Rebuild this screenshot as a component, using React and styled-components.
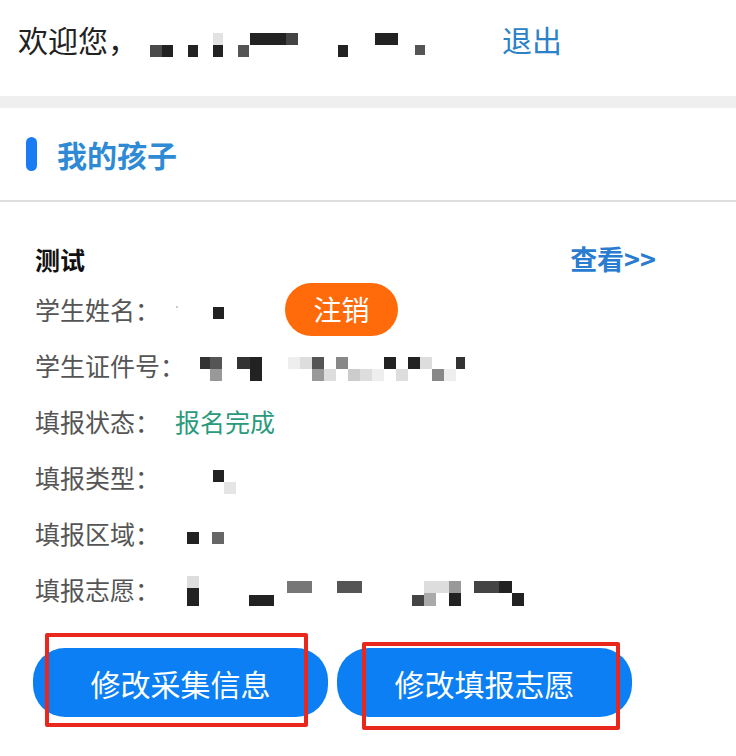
import React from "react";
import styled, { createGlobalStyle } from "styled-components";

const Global = createGlobalStyle`
  html, body { margin: 0; padding: 0; background: #fff; }
  body { font-family: "Noto Sans CJK SC", "Noto Sans", sans-serif; }
`;

const Page = styled.div`
  width: 736px;
  min-height: 756px;
  background: #fff;
  overflow: hidden;
`;

const Header = styled.header`
  height: 96px;
  box-sizing: border-box;
  padding: 0 0 18px 18px;
  display: flex;
  align-items: center;
  font-size: 30px;
  color: #222;
`;

const Greeting = styled.span`
  width: 120px;
  white-space: nowrap;
  line-height: 1;
`;

const Logout = styled.a`
  color: #2b82c8;
  font-size: 30px;
  line-height: 1;
  text-decoration: none;
`;

const Band = styled.div`
  height: 12px;
  background: #efefef;
`;

const SectionTitle = styled.div`
  height: 92px;
  display: flex;
  align-items: center;
  gap: 20px;
  padding-left: 26px;
  border-bottom: 2px solid #dedede;
`;

const TitleBar = styled.span`
  width: 11px;
  height: 34px;
  border-radius: 6px;
  background: #1a7cf5;
`;

const TitleText = styled.h2`
  margin: 0;
  font-size: 30px;
  font-weight: 600;
  color: #2e8ad4;
  line-height: 1;
`;

const Card = styled.section`
  padding: 34px 0 0 35px;
`;

const CardHead = styled.div`
  height: 45px;
  display: flex;
  align-items: center;
  justify-content: space-between;
  padding-right: 80px;
`;

const ChildName = styled.span`
  font-size: 25px;
  font-weight: 700;
  color: #111;
`;

const ViewLink = styled.a`
  font-size: 27px;
  font-weight: 700;
  color: #2a7cd0;
  text-decoration: none;
`;

const InfoRow = styled.div`
  height: 56px;
  display: flex;
  align-items: center;
  font-size: 25px;
  line-height: 1;
`;

const Label = styled.span`
  color: #555;
  white-space: nowrap;
  margin-right: ${(p) => p.$gap || 15}px;
`;

const Status = styled.span`
  color: #2a9a7c;
`;

const CancelButton = styled.button`
  width: 113px;
  height: 53px;
  border: none;
  border-radius: 27px;
  background: #ff6a0a;
  color: #fff;
  font-family: inherit;
  font-size: 28px;
  padding: 0;
  line-height: 1;
`;

const ButtonRow = styled.div`
  position: relative;
  margin-top: 31px;
  padding-left: 33px;
  display: flex;
  gap: 9px;
`;

const ActionButton = styled.button`
  width: 295px;
  height: 69px;
  border: none;
  border-radius: 32px;
  background: #0b7ff3;
  color: #fff;
  font-family: inherit;
  font-size: 30px;
  padding: 0;
`;

const Highlight = styled.div`
  position: absolute;
  box-sizing: border-box;
  border: 4px solid #e9271d;
  border-radius: 2px;
  pointer-events: none;
`;

const MosaicSvg = styled.svg`
  display: block;
  flex: none;
`;

const Mosaic = ({ width, height, cells }) => (
  <MosaicSvg width={width} height={height} viewBox={`0 0 ${width} ${height}`}>
    {cells.map(([x, y, w, h, c], i) => (
      <rect key={i} x={x} y={y} width={w} height={h} fill={c} />
    ))}
  </MosaicSvg>
);

const headerCells = [
  [12, 26, 12, 12, "#4a4a4a"],
  [24, 26, 11, 12, "#222"],
  [50, 26, 10, 12, "#222"],
  [75, 14, 10, 12, "#e2e2e2"],
  [75, 26, 10, 12, "#222"],
  [100, 26, 11, 12, "#555"],
  [112, 14, 36, 12, "#222"],
  [148, 14, 12, 12, "#444"],
  [200, 26, 10, 12, "#222"],
  [237, 14, 23, 12, "#222"],
  [277, 26, 10, 10, "#555"],
];

const nameCells = [
  [1, 25, 2, 2, "#ccc"],
  [38, 26, 11, 12, "#222"],
];

const idCells = [
  [0, 20, 10, 12, "#333"],
  [10, 20, 12, 12, "#555"],
  [10, 32, 12, 12, "#999"],
  [37, 20, 13, 12, "#333"],
  [50, 20, 12, 24, "#222"],
  [88, 20, 12, 12, "#eee"],
  [100, 20, 12, 12, "#ddd"],
  [112, 20, 12, 12, "#555"],
  [112, 32, 12, 12, "#999"],
  [124, 32, 12, 12, "#ddd"],
  [136, 20, 12, 12, "#888"],
  [148, 32, 12, 12, "#ccc"],
  [160, 32, 12, 12, "#ddd"],
  [172, 32, 12, 12, "#eee"],
  [184, 20, 12, 12, "#222"],
  [196, 32, 12, 12, "#ddd"],
  [208, 20, 12, 12, "#222"],
  [220, 20, 12, 12, "#ddd"],
  [232, 32, 12, 12, "#888"],
  [244, 32, 12, 12, "#eee"],
  [256, 20, 9, 12, "#333"],
];

const typeCells = [
  [38, 21, 11, 12, "#222"],
  [49, 33, 12, 12, "#e5e5e5"],
];

const areaCells = [
  [12, 27, 12, 12, "#222"],
  [37, 27, 12, 12, "#666"],
];

const wishCells = [
  [12, 15, 12, 12, "#ddd"],
  [12, 27, 12, 18, "#222"],
  [74, 34, 25, 11, "#222"],
  [112, 20, 25, 12, "#777"],
  [162, 20, 25, 12, "#555"],
  [237, 34, 12, 11, "#444"],
  [249, 20, 12, 12, "#ddd"],
  [249, 32, 12, 13, "#aaa"],
  [261, 20, 13, 12, "#ddd"],
  [274, 20, 12, 12, "#999"],
  [274, 32, 12, 13, "#222"],
  [299, 20, 25, 12, "#444"],
  [324, 20, 13, 12, "#222"],
  [337, 32, 12, 13, "#222"],
];

export default function App() {
  return (
    <Page>
      <Global />
      <Header>
        <Greeting>欢迎您，</Greeting>
        <Mosaic width={364} height={40} cells={headerCells} />
        <Logout>退出</Logout>
      </Header>
      <Band />
      <SectionTitle>
        <TitleBar />
        <TitleText>我的孩子</TitleText>
      </SectionTitle>
      <Card>
        <CardHead>
          <ChildName>测试</ChildName>
          <ViewLink>查看&gt;&gt;</ViewLink>
        </CardHead>
        <InfoRow>
          <Label>学生姓名：</Label>
          <Mosaic width={110} height={56} cells={nameCells} />
          <CancelButton>注销</CancelButton>
        </InfoRow>
        <InfoRow>
          <Label>学生证件号：</Label>
          <Mosaic width={280} height={56} cells={idCells} />
        </InfoRow>
        <InfoRow>
          <Label>填报状态：</Label>
          <Status>报名完成</Status>
        </InfoRow>
        <InfoRow>
          <Label>填报类型：</Label>
          <Mosaic width={80} height={56} cells={typeCells} />
        </InfoRow>
        <InfoRow>
          <Label>填报区域：</Label>
          <Mosaic width={80} height={56} cells={areaCells} />
        </InfoRow>
        <InfoRow>
          <Label>填报志愿：</Label>
          <Mosaic width={360} height={56} cells={wishCells} />
        </InfoRow>
      </Card>
      <ButtonRow>
        <ActionButton>修改采集信息</ActionButton>
        <ActionButton>修改填报志愿</ActionButton>
        <Highlight style={{ left: 45, top: -15, width: 263, height: 94 }} />
        <Highlight style={{ left: 362, top: -6, width: 258, height: 88 }} />
      </ButtonRow>
    </Page>
  );
}
